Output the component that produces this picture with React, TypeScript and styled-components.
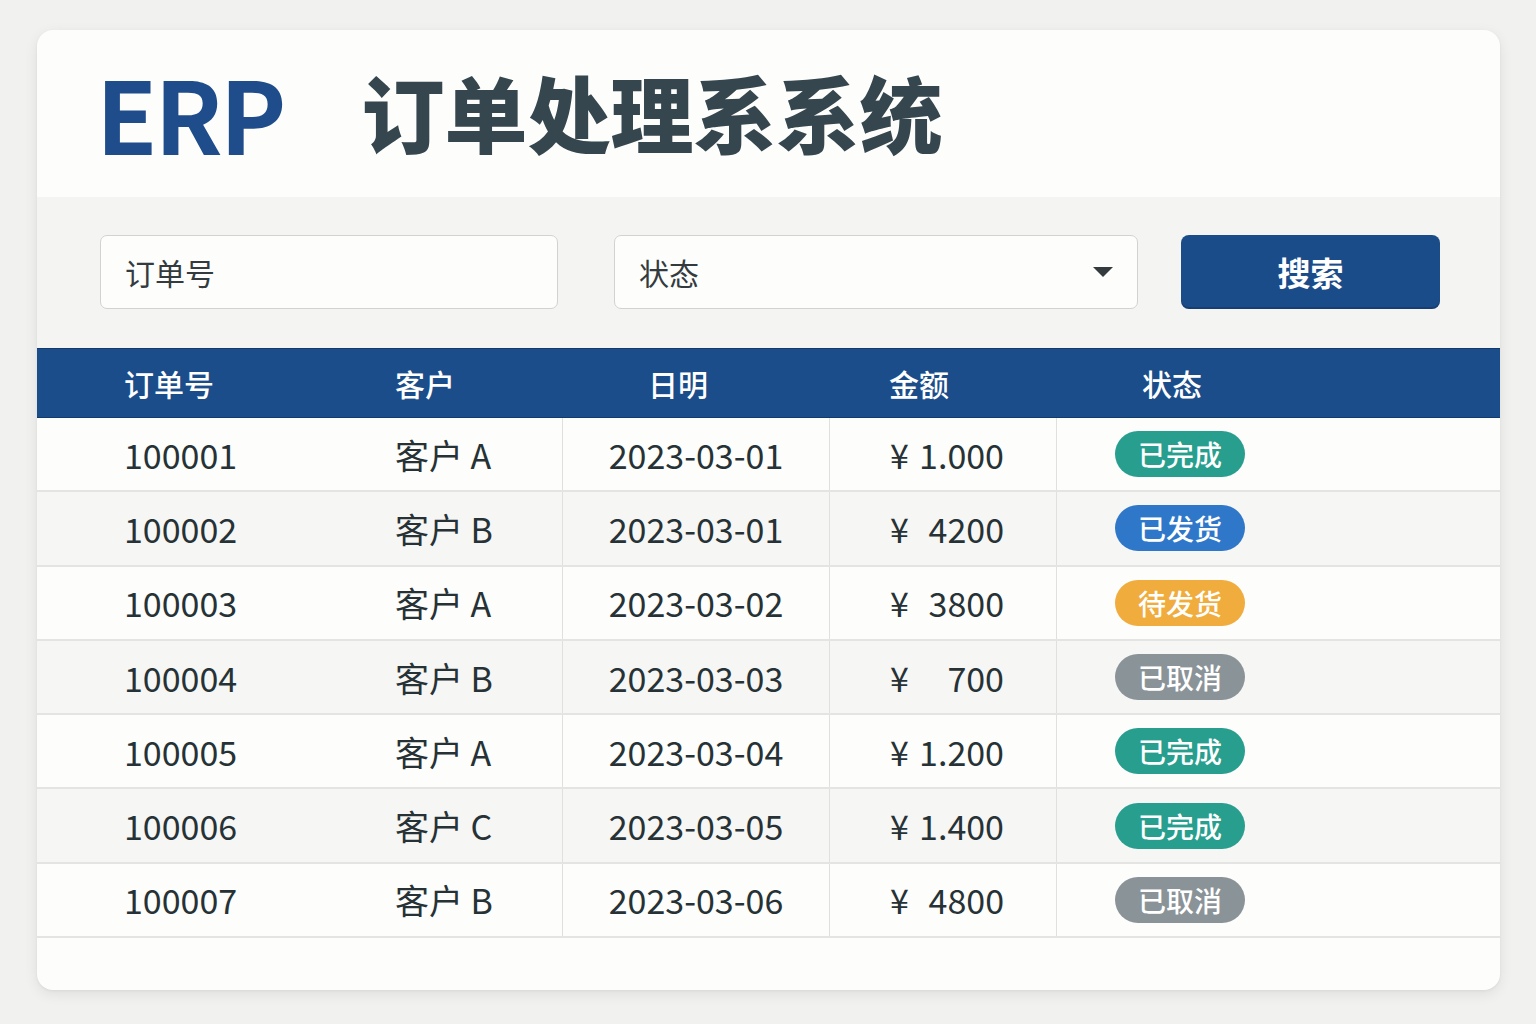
import styled, { createGlobalStyle } from "styled-components";

const GlobalStyle = createGlobalStyle`
    * { box-sizing: border-box; }
    body {
        margin: 0;
        background: #f1f1ef;
        font-family: "Noto Sans CJK SC", "Noto Sans", sans-serif;
        color: #2a3438;
    }
`

const Page = styled.div`
    width: 1536px;
    height: 1024px;
    padding: 30px 36px 34px 37px;
`

const Card = styled.div`
    width: 1463px;
    height: 960px;
    background: #fdfdfb;
    border-radius: 16px;
    overflow: hidden;
    box-shadow: 0 4px 14px rgba(0, 0, 0, 0.08), 0 1px 3px rgba(0, 0, 0, 0.05);
    display: flex;
    flex-direction: column;
`

const TitleBar = styled.div`
    display: flex;
    align-items: center;
    height: 167px;
    padding: 0 0 4px 59px;
`

const Brand = styled.span`
    font-size: 100px;
    font-weight: 700;
    color: #1f4d8b;
    letter-spacing: -3px;
    line-height: 1;
    margin-right: 78px;
`

const TitleText = styled.span`
    font-size: 83px;
    font-weight: 900;
    color: #35464e;
    line-height: 1;
`

const FilterBar = styled.div`
    display: flex;
    align-items: center;
    height: 151px;
    padding: 0 60px 2px 63px;
    background: #f4f4f2;
`

const Field = styled.div<{ $width: number; $gap: number }>`
    display: flex;
    align-items: center;
    justify-content: space-between;
    width: ${(p) => p.$width}px;
    height: 74px;
    margin-right: ${(p) => p.$gap}px;
    padding: 0 24px 0 24px;
    background: #fdfdfb;
    border: 1.5px solid #d2d2d0;
    border-radius: 7px;
    font-size: 30px;
    color: #333b3f;
`

const Caret = styled.span`
    width: 0;
    height: 0;
    border-left: 10px solid transparent;
    border-right: 10px solid transparent;
    border-top: 10px solid #333b3f;
`

const SearchButton = styled.button`
    width: 259px;
    height: 74px;
    border: none;
    border-radius: 8px;
    background: #1b4c8a;
    box-shadow: inset 0 -2px 0 rgba(0, 0, 0, 0.18);
    color: #ffffff;
    font-family: inherit;
    font-size: 33px;
    font-weight: 700;
`

const Grid = styled.div`
    display: grid;
    grid-template-columns: 270px 255px 267px 227px 444px;
`

const HeadRow = styled(Grid)`
    height: 70px;
    background: #1b4d8a;
    border-top: 1px solid #123a6d;
    border-bottom: 1px solid #123a6d;
`

const HeadCell = styled.div<{ $pad: number }>`
    display: flex;
    align-items: center;
    padding-left: ${(p) => p.$pad}px;
    color: #ffffff;
    font-size: 30px;
    font-weight: 500;
`

const Row = styled(Grid)<{ $alt: boolean }>`
    height: 74.3px;
    background: ${(p) => (p.$alt ? "#f6f6f4" : "#fdfdfb")};
    border-bottom: 2px solid #e4e4e2;
`

const Cell = styled.div<{ $pad?: number; $center?: boolean; $line?: boolean }>`
    display: flex;
    align-items: center;
    justify-content: ${(p) => (p.$center ? "center" : "flex-start")};
    padding-left: ${(p) => p.$pad ?? 0}px;
    border-left: ${(p) => (p.$line ? "1.5px solid #e0e0de" : "none")};
    font-size: 34px;
    color: #263236;
`

const Amount = styled.div`
    display: flex;
    justify-content: space-between;
    width: 114px;
    margin-left: 60px;
`

const Badge = styled.span<{ $color: string }>`
    display: inline-flex;
    align-items: center;
    justify-content: center;
    width: 130px;
    height: 46px;
    border-radius: 23px;
    background: ${(p) => p.$color};
    color: #ffffff;
    font-size: 28px;
    font-weight: 500;
`

const statusColor: Record<string, string> = {
    "已完成": "#279e8e",
    "已发货": "#2f77c9",
    "待发货": "#f0ac3c",
    "已取消": "#8a9398",
}

const orders = [
    { id: "100001", customer: "客户 A", date: "2023-03-01", amount: "1.000", status: "已完成" },
    { id: "100002", customer: "客户 B", date: "2023-03-01", amount: "4200", status: "已发货" },
    { id: "100003", customer: "客户 A", date: "2023-03-02", amount: "3800", status: "待发货" },
    { id: "100004", customer: "客户 B", date: "2023-03-03", amount: "700", status: "已取消" },
    { id: "100005", customer: "客户 A", date: "2023-03-04", amount: "1.200", status: "已完成" },
    { id: "100006", customer: "客户 C", date: "2023-03-05", amount: "1.400", status: "已完成" },
    { id: "100007", customer: "客户 B", date: "2023-03-06", amount: "4800", status: "已取消" },
]

function App() {
    return (
        <Page>
            <GlobalStyle />
            <Card>
                <TitleBar>
                    <Brand>ERP</Brand>
                    <TitleText>订单处理系系统</TitleText>
                </TitleBar>

                <FilterBar>
                    <Field $width={458} $gap={56}>订单号</Field>
                    <Field $width={524} $gap={43}>
                        状态
                        <Caret />
                    </Field>
                    <SearchButton>搜索</SearchButton>
                </FilterBar>

                <HeadRow>
                    <HeadCell $pad={87}>订单号</HeadCell>
                    <HeadCell $pad={88}>客户</HeadCell>
                    <HeadCell $pad={86}>日明</HeadCell>
                    <HeadCell $pad={60}>金额</HeadCell>
                    <HeadCell $pad={86}>状态</HeadCell>
                </HeadRow>

                {orders.map((o, i) => (
                    <Row key={o.id} $alt={i % 2 === 1}>
                        <Cell $pad={87}>{o.id}</Cell>
                        <Cell $pad={88}>{o.customer}</Cell>
                        <Cell $center $line>{o.date}</Cell>
                        <Cell $line>
                            <Amount>
                                <span>¥</span>
                                <span>{o.amount}</span>
                            </Amount>
                        </Cell>
                        <Cell $pad={58} $line>
                            <Badge $color={statusColor[o.status]}>{o.status}</Badge>
                        </Cell>
                    </Row>
                ))}
            </Card>
        </Page>
    );
}

export default App;
